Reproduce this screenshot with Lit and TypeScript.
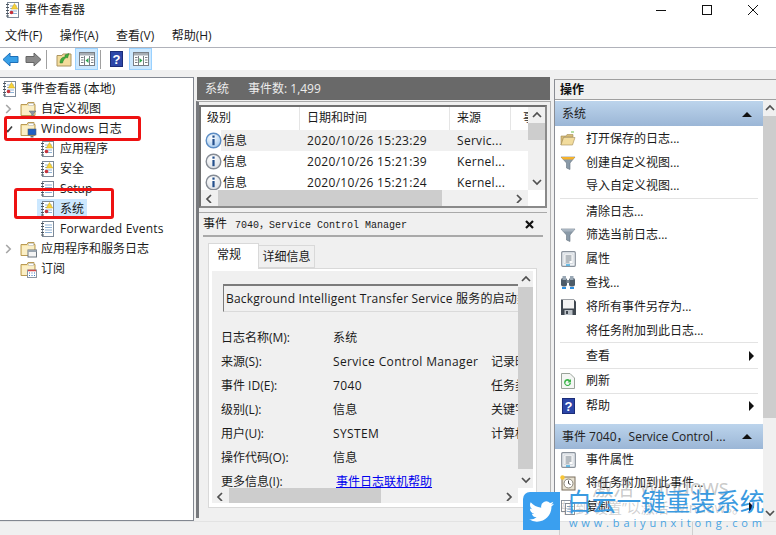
import { LitElement, html, svg, css } from "lit";
import { customElement } from "lit/decorators.js";

const logIcon = (kind: "warn" | "plain") => html`<svg width="14" height="16" viewBox="0 0 14 16">
  <rect x="2.5" y="0.5" width="11" height="15" fill="#fff" stroke="#7d8a99"/>
  <path d="M1 2.5h3M1 5.5h3M1 8.5h3M1 11.5h3M1 14h3" stroke="#4d5660" stroke-width="1.2"/>
  <path d="M5 4h7M5 6.5h7M5 9h7M5 11.5h7" stroke="#8fb2d6"/>
  ${kind === "warn"
    ? svg`<path d="M9.5 1.5l3.2 5.5H6.3z" fill="#f8d33a" stroke="#c9a21a" stroke-width=".5"/><circle cx="6.5" cy="10.5" r="1.8" fill="#c8323a"/>`
    : ""}
</svg>`;

const folderBase = svg`<path d="M1 3.5h6l1-2h6v2h1v11H1z" fill="#f7e3a3" stroke="#b99a55"/><path d="M2 5h12v9H2z" fill="#fbefc6"/><path d="M8.5 2.5h5v2h-5z" fill="#fff" stroke="#aab0b8" stroke-width=".5"/>`;
const folderIcon = (o: "funnel" | "win" | "doc" | "cal") => html`<svg width="17" height="17" viewBox="0 0 17 17">
  ${folderBase}
  ${o === "funnel" ? svg`<path d="M9 10h7l-2.7 3v3.5l-1.6-.8V13z" fill="#8c97a3" stroke="#5e6872" stroke-width=".5"/>` : ""}
  ${o === "win" ? svg`<rect x="8" y="8" width="8" height="6" fill="#1f5fc4" stroke="#55606c" stroke-width=".6"/><path d="M10.5 15h3v1.5h-3z" fill="#67717c"/>` : ""}
  ${o === "doc" ? svg`<rect x="8" y="9" width="8.5" height="7" fill="#f4f4f4" stroke="#6d7680"/><path d="M8 9h8.5v2H8z" fill="#9aa5b0"/>` : ""}
  ${o === "cal" ? svg`<rect x="7.5" y="9" width="9" height="7.5" fill="#fff" stroke="#8b95a0"/><path d="M8 9.5h8" stroke="#d24a4a" stroke-width="1.5"/><path d="M9 12h1M11.5 12h1M14 12h1M9 14.5h1M11.5 14.5h1M14 14.5h1" stroke="#3b77c4"/>` : ""}
</svg>`;

const info = (blue: boolean) => html`<svg width="17" height="17" viewBox="0 0 17 17">
  <defs><radialGradient id=${blue ? "ib" : "ig"} cx=".4" cy=".3" r=".8"><stop offset="0" stop-color="#fff"/><stop offset="1" stop-color=${blue ? "#9cc4ec" : "#d8dce2"}/></radialGradient></defs>
  <circle cx="8.5" cy="8.5" r="7.3" fill=${blue ? "url(#ib)" : "url(#ig)"} stroke=${blue ? "#5b8cc4" : "#858b94"} stroke-width="1.4"/>
  <rect x="7.4" y="3.5" width="2.2" height="2.2" fill="#234f8c"/><rect x="7.4" y="7" width="2.2" height="6.2" fill="#234f8c"/>
</svg>`;

const chevR = html`<svg width="7" height="10" viewBox="0 0 7 10"><path d="M1.2 1l4 4-4 4" fill="none" stroke="#a6a6a6" stroke-width="1.6"/></svg>`;
const chevOpen = html`<svg width="8" height="8" viewBox="0 0 8 8"><path d="M.8 4.5l2 2L7 1.500" fill="none" stroke="#404040" stroke-width="1.700"/></svg>`;
const closeX = html`<svg width="9" height="9" viewBox="0 0 9 9"><path d="M1 1l7 7M8 1L1 8" stroke="#111" stroke-width="2.200"/></svg>`;

const arrowBack = html`<svg width="17" height="15" viewBox="0 0 17 15"><path d="M8 1L1 7.500 8 14v-3.500h8v-6H8z" fill="#38a0e8" stroke="#1d6fb8"/></svg>`;
const arrowFwd = html`<svg width="17" height="15" viewBox="0 0 17 15"><path d="M9 1l7 6.500L9 14v-3.500H1v-6h8z" fill="#8a8a8a" stroke="#666"/></svg>`;
const folderUp = html`<svg width="16" height="16" viewBox="0 0 16 16"><path d="M1 4.500h5l1-1.500h8v12H1z" fill="#f3dc9c" stroke="#ad9560"/><path d="M4 12c0-4 2-6 5-6V4l4-1.500L11.500 7 10 6.500c-1.500 1-3 3-3.500 5.500z" fill="#3fae3c" stroke="#2a7a28" stroke-width=".5"/></svg>`;
const panel = (left: boolean) => html`<svg width="16" height="14" viewBox="0 0 16 14"><rect x=".5" y=".5" width="15" height="13" fill="#fff" stroke="#7a7f86"/><path d="M1 1h14v2.500H1z" fill="#a7adb4"/><path d="M5.500 4v9M10.500 4v9" stroke="#7a7f86"/><path d="M2 5.500h2.500M2 8h2.500M2 10.500h2.500M12 5.500h2.500M12 8h2.500M12 10.500h2.500" stroke="#7a7f86"/><path d=${left ? "M9.500 6v5L6.500 8.500z" : "M6.500 6v5l3-2.500z"} fill="#2fa84f"/></svg>`;
const helpIcon = (w: number, h: number) => html`<svg width=${w} height=${h} viewBox="0 0 13 16"><rect width="13" height="16" fill="#2c46a8"/><rect x=".5" y=".5" width="12" height="15" fill="none" stroke="#1b2c78"/><text x="6.500" y="13" font-size="13" font-family="Liberation Sans" font-weight="700" text-anchor="middle" fill="#fff">?</text></svg>`;

const funnel = (orange: boolean) => html`<svg width="16" height="14" viewBox="0 0 16 14"><path d="M1 1h14L10 7v6.500L6.500 12V7z" fill="#8a9aa8" stroke="#66737f" stroke-width=".6"/><path d="M1 1h14l-2 2.500H3z" fill=${orange ? "#f6b22b" : "#a8b4c0"}/></svg>`;
const openFolder = html`<svg width="16" height="15" viewBox="0 0 16 15"><path d="M1 5h5l1-1.500h6V6H4L1 14z" fill="#d8bd78" stroke="#a38c55" stroke-width=".6"/><path d="M3.500 6.500H15L12.500 14H1z" fill="#f2dc9d" stroke="#a38c55" stroke-width=".6"/><path d="M11 1h3" stroke="#6cc04a"/></svg>`;
const props = html`<svg width="15" height="16" viewBox="0 0 15 16"><rect x=".7" y=".7" width="13.600" height="14.600" rx="1" fill="#eef2f6" stroke="#8a929c" stroke-width="1.2"/><rect x="3" y="3" width="9" height="9.500" fill="#fff" stroke="#b6bcc4" stroke-width=".5"/><path d="M4.500 5h6M4.500 7h6M4.500 9h6M4.500 11h4" stroke="#6d7883"/><path d="M5 14h4" stroke="#35a7e0" stroke-width="1.400"/></svg>`;
const binoc = html`<svg width="16" height="16" viewBox="0 0 16 16"><rect x="1" y="3" width="6" height="8.500" rx="2" fill="#4d5b68"/><rect x="9" y="3" width="6" height="8.500" rx="2" fill="#4d5b68"/><rect x="2.500" y="1" width="3.500" height="4" fill="#9aa8b5"/><rect x="10" y="1" width="3.500" height="4" fill="#9aa8b5"/><rect x="6.500" y="5" width="3" height="3" fill="#7d8994"/><path d="M2 13h4M10 13h4" stroke="#2f8fe0" stroke-width="2"/></svg>`;
const floppy = html`<svg width="15" height="16" viewBox="0 0 15 16"><path d="M0 .5h13L15 2.500V16H0z" fill="#3f4750"/><rect x="2" y="1" width="11" height="8.500" fill="#f3f3f3"/><rect x="3.500" y="11" width="8" height="5" fill="#bcc2c8"/><rect x="5" y="12" width="2" height="3" fill="#3f4750"/></svg>`;
const refresh = html`<svg width="14" height="16" viewBox="0 0 14 16"><path d="M.5.500H9L13.500 5v10.500H.5z" fill="#f4f6f4" stroke="#9aa39a"/><path d="M10 10a3.500 3.500 0 1 1-1-3l1-1v3.500H6.500l1.200-1.200A2 2 0 1 0 8.500 10z" fill="#3cb54a"/></svg>`;
const clock = html`<svg width="16" height="16" viewBox="0 0 16 16"><rect x="2" y="2" width="13" height="13" fill="#e8e2d2" stroke="#7a6f5c"/><circle cx="8.500" cy="8.500" r="4.500" fill="#fff" stroke="#8a8578"/><path d="M8.500 5.500v3l2 1" fill="none" stroke="#444"/><circle cx="2.500" cy="2.500" r="2.200" fill="#f8c637"/></svg>`;
const copy = html`<svg width="14" height="15" viewBox="0 0 14 15"><rect x=".5" y=".5" width="9" height="11" fill="#fff" stroke="#8a929c"/><rect x="4.500" y="3.500" width="9" height="11" fill="#fff" stroke="#8a929c"/><path d="M6 6.500h6M6 9h6M6 11.500h6" stroke="#8fb2d6"/></svg>`;
const twitter = html`<svg width="25" height="25" viewBox="0 0 24 24"><path fill="#fff" d="M23.950 4.570a10 10 0 0 1-2.820.770 4.960 4.960 0 0 0 2.160-2.720c-.950.550-2 .960-3.120 1.190a4.920 4.920 0 0 0-8.380 4.480C7.690 8.100 4.070 6.130 1.640 3.160a4.900 4.900 0 0 0-.670 2.480c0 1.710.870 3.210 2.190 4.100a4.900 4.900 0 0 1-2.230-.620v.060a4.920 4.920 0 0 0 3.950 4.830 4.900 4.900 0 0 1-2.210.080 4.940 4.940 0 0 0 4.600 3.420A9.870 9.870 0 0 1 0 19.540a13.940 13.940 0 0 0 7.550 2.210c9.050 0 14-7.500 14-13.980 0-.210 0-.420-.020-.630A9.900 9.900 0 0 0 24 4.590z"/></svg>`;

const ar = (d: "u" | "d" | "l" | "r") => {
  const p = { u: "M1 6l4-4 4 4", d: "M1 2l4 4 4-4", l: "M6 1L2 5l4 4", r: "M2 1l4 4-4 4" }[d];
  return html`<svg width="10" height="10" viewBox="0 0 10 8"><path d=${p} fill="none" stroke="#505050" stroke-width="1.700"/></svg>`;
};

@customElement("app-root")
export class AppRoot extends LitElement {
  static styles = css`
    :host { display: block; width: 776px; height: 535px; overflow: hidden; font-family: "Open Sans", "Noto Sans CJK SC", sans-serif; font-size: 12px; color: #1a1a1a; }
    * { box-sizing: border-box; }
    svg { display: block; flex: none; }
    .win { position: relative; width: 776px; height: 535px; display: flex; flex-direction: column; background: #f0f0f0; overflow: hidden; }
    .title { height: 25px; background: #fff; display: flex; align-items: center; padding: 0 0 6px 5px; gap: 6px; line-height: 1; }
    .title .ctl { margin-left: auto; display: flex; align-items: center; }
    .ctl div { width: 46px; display: flex; justify-content: center; }
    .menu { height: 23px; background: #fff; border-bottom: 1px solid #b0b2ba; display: flex; align-items: center; padding: 0 0 3px 5px; gap: 17.5px; }
    .tools { height: 22px; background: #fff; display: flex; align-items: center; padding-left: 2px; flex: none; }
    .tb { display: flex; align-items: center; justify-content: center; height: 22px; }
    .back { width: 17px; }
    .fwd { width: 17px; margin-left: 6px; }
    .tsep { width: 1px; height: 19px; background: #a0a0a0; }
    .tsep.sa { margin: 0 9px 0 4px; }
    .tsep.sb { margin: 0 9px 0 2px; }
    .up { width: 16px; margin-right: 3px; }
    .tog { width: 23px; background: #cce8ff; border: 1px solid #99d1ff; }
    .hp { width: 13px; margin-right: 6px; }
    .main { flex: 1; display: flex; padding-top: 7px; min-height: 0; }
    .tree { width: 194px; background: #fff; border: 1px solid #828790; border-left: 0; padding-top: 1px; flex: none; }
    .row { height: 20px; display: flex; align-items: center; white-space: nowrap; line-height: 1; }
    .root { padding-left: 2px; gap: 5px; }
    .l1 { padding-left: 5px; }
    .l1 .chev { width: 15px; display: flex; }
    .l1 .lab { margin-left: 4px; }
    .l2 { padding-left: 37px; }
    .item { display: flex; align-items: center; height: 20px; padding: 0 3px; gap: 6px; }
    .item.sel { background: #cce8ff; }
    .lt { letter-spacing: .3px; }
    .lts { letter-spacing: .2px; }
    .mid { width: 357px; margin-left: 2px; display: flex; flex-direction: column; flex: none; }
    .mhead { height: 23px; margin-left: 1px; margin-right: 3px; background: #696969; color: #ececec; display: flex; align-items: center; padding-left: 8px; gap: 19px; flex: none; line-height: 1; }
    .mbody { flex: 1; min-height: 0; border-left: 3px solid #77797d; border-top: 1px solid #a9a9a9; border-right: 1px solid #b4b4b4; margin-right: 2px; margin-top: 1px; margin-bottom: 3px; padding: 3px 3px 0 0; display: flex; flex-direction: column; }
    .list { height: 103px; flex: none; border: 2px solid #707070; border-right-color: #8a8a8a; border-bottom-color: #8a8a8a; background: #fff; display: flex; flex-direction: column; }
    .ltop { flex: 1; min-height: 0; display: flex; }
    .lcols { flex: 1; min-width: 0; overflow: hidden; }
    .lhead { height: 23px; display: grid; grid-template-columns: 99px 150px 61px 40px; }
    .lhead div { border-right: 1px solid #e5e5e5; padding-left: 7px; line-height: 22px; white-space: nowrap; overflow: hidden; }
    .lhead div:first-child { padding-left: 6px; }
    .lhead div:last-child { padding-left: 12px; border-right: 0; }
    .lrow { height: 21px; display: grid; grid-template-columns: 99px 150px 61px; align-items: center; line-height: 1; white-space: nowrap; }
    .lrow .lev { display: flex; align-items: center; height: 21px; padding-left: 4px; gap: 1px; }
    .lrow .src { padding-left: 7px; overflow: hidden; }
    .lrow .dt { padding-left: 7px; }
    .lrow.on { background: linear-gradient(90deg, #fff 20px, #f0f0f0 20px); }
    .vbar { background: #f0f0f0; display: flex; flex-direction: column; align-items: center; flex: none; }
    .vbar.list-v { width: 17px; }
    .vbar .arr { height: 16px; display: flex; align-items: center; justify-content: center; flex: none; }
    .vbar .thumb { background: #cdcdcd; width: 100%; flex: none; }
    .vbar .rest { flex: 1; }
    .list-v .thumb { height: 17px; }
    .hbar { height: 16px; background: #f0f0f0; display: flex; align-items: center; flex: none; }
    .hbar .arr { width: 17px; display: flex; justify-content: center; flex: none; }
    .hbar .thumb { background: #cdcdcd; height: 100%; flex: none; }
    .hbar .rest { flex: 1; }
    .h1 { margin-right: 17px; }
    .h1 .thumb { width: 224px; }
    .event { flex: 1; min-height: 0; margin-top: 4px; border-top: 1px solid #a9a9a9; padding: 0 4px; display: flex; flex-direction: column; background: #f0f0f0; }
    .etitle { height: 22px; display: flex; align-items: center; justify-content: space-between; border-bottom: 2px solid #a9a9a9; flex: none; box-sizing: content-box; line-height: 1; padding-right: 9px; }
    .mono { font-family: "Liberation Mono", "Noto Sans CJK SC", monospace; font-size: 10px; margin-left: 2px; }
    .tabs { display: flex; align-items: flex-end; margin: 6px 0 0 5px; height: 25px; flex: none; }
    .tab { line-height: 1; display: flex; align-items: center; justify-content: center; }
    .tab.on { width: 51px; height: 26px; background: #fff; border: 1px solid #d9d9d9; border-bottom: 0; padding: 0 0 3px 8px; margin-bottom: -1px; position: relative; justify-content: flex-start; }
    .tab.off { width: 56px; height: 23px; border: 1px solid #d9d9d9; border-left: 0; }
    .tabbody { width: 329px; height: 240px; flex: none; margin-left: 5px; border: 1px solid #d9d9d9; background: #fff; padding: 2px 3px 4px 3px; display: flex; flex-direction: column; }
    .scrollwrap { flex: 1; min-height: 0; display: flex; }
    .content { flex: 1; min-width: 0; background: #f0f0f0; overflow: hidden; padding: 13px 0 0 9px; }
    .dbox { height: 28px; width: 330px; margin: 0 0 14px 2px; border: 2px solid #7b7b7b; border-right: 0; border-bottom: 1px solid #dadada; border-left-width: 1px; background: #f0f0f0; white-space: nowrap; line-height: 25px; padding-left: 2px; }
    .grid { display: grid; grid-template-columns: 112px 158px 60px; grid-auto-rows: 24px; align-items: center; white-space: nowrap; line-height: 1; }
    .link { color: #0000ee; text-decoration: underline; padding-left: 3px; }
    .scm { letter-spacing: .35px; }
    .v2 { width: 15px; }
    .v2 .thumb { height: 182px; }
    .tabbody .hbar { height: 15px; margin-right: 15px; }
    .h2 .thumb { width: 152px; }
    .right { flex: 1; min-width: 0; margin-left: 1px; margin-top: 2px; border-left: 1px solid #8a8d94; border-top: 1px solid #a0a0a0; display: flex; flex-direction: column; background: #fff; }
    .rhead { height: 20px; background: #f0f0f0; border-bottom: 1px solid #a0a0a0; font-weight: 700; padding-left: 5px; line-height: 19px; flex: none; color: #111; }
    .rbody { flex: 1; min-height: 0; display: flex; }
    .acts { flex: 1; min-width: 0; overflow: hidden; padding-top: 1px; }
    .sec { height: 25px; background: linear-gradient(#bcd4ec, #9bb6d6); display: flex; align-items: center; padding: 1px 11px 0 7px; justify-content: space-between; white-space: nowrap; color: #222; line-height: 1; }
    .sec + .act { margin-top: 1px; }
    .sec.two { margin-top: 6px; }
    .sec.two + .act { margin-top: -1px; }
    .tri { width: 0; height: 0; border-left: 5px solid transparent; border-right: 5px solid transparent; border-bottom: 5px solid #111; }
    .act { height: 23.8px; display: flex; align-items: center; padding-left: 5px; line-height: 1; white-space: nowrap; position: relative; }
    .act .i { width: 16px; display: flex; justify-content: center; margin-right: 10px; flex: none; }
    .act .more { position: absolute; right: 9px; width: 0; height: 0; border-top: 5px solid transparent; border-bottom: 5px solid transparent; border-left: 5px solid #111; }
    .asep { height: 1px; background: #e3e3e3; margin: 0 5px; }
    .asep + .act { margin-top: .3px; }
    .v3 { width: 13px; }
    .v3 .thumb { height: 302px; }
    .status { height: 14px; flex: none; border-top: 1px solid #e3e3e3; display: flex; background: #f0f0f0; }
    .status div { border-right: 1px solid #d0d0d0; }
    .status .s1 { width: 560px; }
    .status .s2 { width: 133px; }
    .red { position: absolute; border: 3px solid #ee1111; border-radius: 3px; pointer-events: none; }
    .r1 { left: 4px; top: 116px; width: 137px; height: 25px; }
    .r2 { left: 14px; top: 188px; width: 100px; height: 31px; }
    .act1 { position: absolute; left: 592px; top: 474px; font-size: 21px; line-height: 26px; color: rgba(120,120,120,.4); white-space: nowrap; }
    .act2 { position: absolute; left: 561px; top: 500px; font-size: 14px; line-height: 16px; color: rgba(120,120,120,.35); white-space: nowrap; }
    .tw { position: absolute; left: 523px; top: 492px; width: 37px; height: 38px; background: #3a9fef; border-radius: 7px 0 0 0; display: flex; align-items: center; justify-content: center; }
    .brand { position: absolute; left: 567px; top: 488px; font-size: 24.700px; line-height: 28px; color: #3a9ae0; white-space: nowrap; }
    .url { position: absolute; left: 569px; top: 516px; font-size: 11px; line-height: 14px; letter-spacing: 3.850px; color: #4aa4e2; white-space: nowrap; }
  `;

  render() {
    const lrows = [
      ["2020/10/26 15:23:29", "Servic...", true],
      ["2020/10/26 15:21:39", "Kernel...", false],
      ["2020/10/26 15:21:24", "Kernel...", false],
    ] as const;
    const fields = [
      ["日志名称(M):", "系统", ""],
      ["来源(S):", "Service Control Manager", "记录时间"],
      ["事件 ID(E):", "7040", "任务类别"],
      ["级别(L):", "信息", "关键字"],
      ["用户(U):", "SYSTEM", "计算机"],
      ["操作代码(O):", "信息", ""],
    ];
    return html`<div class="win">
      <div class="title">
        ${logIcon("warn")}<span>事件查看器</span>
        <div class="ctl">
          <div><svg width="10" height="10" viewBox="0 0 10 10"><path d="M0 5.500h10" stroke="#111"/></svg></div>
          <div><svg width="10" height="10" viewBox="0 0 10 10"><rect x=".5" y=".5" width="9" height="9" fill="none" stroke="#111"/></svg></div>
          <div><svg width="10" height="10" viewBox="0 0 10 10"><path d="M0 0l10 10M10 0L0 10" stroke="#111"/></svg></div>
        </div>
      </div>
      <div class="menu"><span>文件(F)</span><span>操作(A)</span><span>查看(V)</span><span>帮助(H)</span></div>
      <div class="tools">
        <div class="tb back">${arrowBack}</div><div class="tb fwd">${arrowFwd}</div>
        <div class="tsep sa"></div>
        <div class="tb up">${folderUp}</div><div class="tb tog">${panel(true)}</div>
        <div class="tsep sb"></div>
        <div class="tb hp">${helpIcon(13, 16)}</div><div class="tb tog">${panel(false)}</div>
      </div>
      <div class="main">
        <div class="tree">
          <div class="row root">${logIcon("warn")}<span>事件查看器 (本地)</span></div>
          <div class="row l1"><span class="chev">${chevR}</span>${folderIcon("funnel")}<span class="lab">自定义视图</span></div>
          <div class="row l1"><span class="chev">${chevOpen}</span>${folderIcon("win")}<span class="lab lt">Windows 日志</span></div>
          <div class="row l2"><div class="item">${logIcon("warn")}<span>应用程序</span></div></div>
          <div class="row l2"><div class="item">${logIcon("warn")}<span>安全</span></div></div>
          <div class="row l2"><div class="item">${logIcon("plain")}<span>Setup</span></div></div>
          <div class="row l2"><div class="item sel">${logIcon("warn")}<span>系统</span></div></div>
          <div class="row l2"><div class="item">${logIcon("plain")}<span class="lts">Forwarded Events</span></div></div>
          <div class="row l1"><span class="chev">${chevR}</span>${folderIcon("doc")}<span class="lab">应用程序和服务日志</span></div>
          <div class="row l1"><span class="chev"></span>${folderIcon("cal")}<span class="lab">订阅</span></div>
        </div>
        <div class="mid">
          <div class="mhead"><span>系统</span><span>事件数: 1,499</span></div>
          <div class="mbody">
            <div class="list">
              <div class="ltop">
                <div class="lcols">
                  <div class="lhead"><div>级别</div><div>日期和时间</div><div>来源</div><div>事件 ID</div></div>
                  ${lrows.map(([d, s, on]) => html`<div class="lrow ${on ? "on" : ""}">
                    <div class="lev">${info(on)}<span>信息</span></div><div class="dt lt">${d}</div><div class="src lt">${s}</div>
                  </div>`)}
                </div>
                <div class="vbar list-v"><div class="arr">${ar("u")}</div><div class="thumb"></div><div class="rest"></div><div class="arr">${ar("d")}</div></div>
              </div>
              <div class="hbar h1"><div class="arr">${ar("l")}</div><div class="thumb"></div><div class="rest"></div><div class="arr">${ar("r")}</div></div>
            </div>
            <div class="event">
              <div class="etitle"><span>事件<span class="mono"> 7040，Service Control Manager</span></span>${closeX}</div>
              <div class="tabs"><div class="tab on">常规</div><div class="tab off">详细信息</div></div>
              <div class="tabbody">
                <div class="scrollwrap">
                  <div class="content">
                    <div class="dbox lts">Background Intelligent Transfer Service 服务的启动类型</div>
                    <div class="grid">
                      ${fields.map(([a, b, c]) => html`<div>${a}</div><div class="scm">${b}</div><div>${c}</div>`)}
                      <div>更多信息(I):</div><div><span class="link">事件日志联机帮助</span></div><div></div>
                    </div>
                  </div>
                  <div class="vbar v2"><div class="arr">${ar("u")}</div><div class="thumb"></div><div class="rest"></div><div class="arr">${ar("d")}</div></div>
                </div>
                <div class="hbar h2"><div class="arr">${ar("l")}</div><div class="thumb"></div><div class="rest"></div><div class="arr">${ar("r")}</div></div>
              </div>
            </div>
          </div>
        </div>
        <div class="right">
          <div class="rhead">操作</div>
          <div class="rbody">
            <div class="acts">
              <div class="sec"><span>系统</span><span class="tri"></span></div>
              <div class="act"><span class="i">${openFolder}</span>打开保存的日志...</div>
              <div class="act"><span class="i">${funnel(true)}</span>创建自定义视图...</div>
              <div class="act"><span class="i"></span>导入自定义视图...</div>
              <div class="asep"></div>
              <div class="act"><span class="i"></span>清除日志...</div>
              <div class="act"><span class="i">${funnel(false)}</span>筛选当前日志...</div>
              <div class="act"><span class="i">${props}</span>属性</div>
              <div class="act"><span class="i">${binoc}</span>查找...</div>
              <div class="act"><span class="i">${floppy}</span>将所有事件另存为...</div>
              <div class="act"><span class="i"></span>将任务附加到此日志...</div>
              <div class="asep"></div>
              <div class="act"><span class="i"></span>查看<span class="more"></span></div>
              <div class="asep"></div>
              <div class="act"><span class="i">${refresh}</span>刷新</div>
              <div class="asep"></div>
              <div class="act"><span class="i">${helpIcon(13, 16)}</span>帮助<span class="more"></span></div>
              <div class="sec two"><span>事件 7040，Service Control ...</span><span class="tri"></span></div>
              <div class="act"><span class="i">${props}</span>事件属性</div>
              <div class="act"><span class="i">${clock}</span>将任务附加到此事件...</div>
              <div class="act"><span class="i">${copy}</span>复制<span class="more"></span></div>
            </div>
            <div class="vbar v3"><div class="arr">${ar("u")}</div><div class="thumb"></div><div class="rest"></div><div class="arr">${ar("d")}</div></div>
          </div>
        </div>
      </div>
      <div class="status"><div class="s1"></div><div class="s2"></div></div>
      <div class="red r1"></div>
      <div class="red r2"></div>
      <div class="act1">激活 Windows</div>
      <div class="act2">转到“设置”以激活 Windows。</div>
      <div class="tw">${twitter}</div>
      <div class="brand">白云一键重装系统</div>
      <div class="url">www.baiyunxitong.com</div>
    </div>`;
  }
}
